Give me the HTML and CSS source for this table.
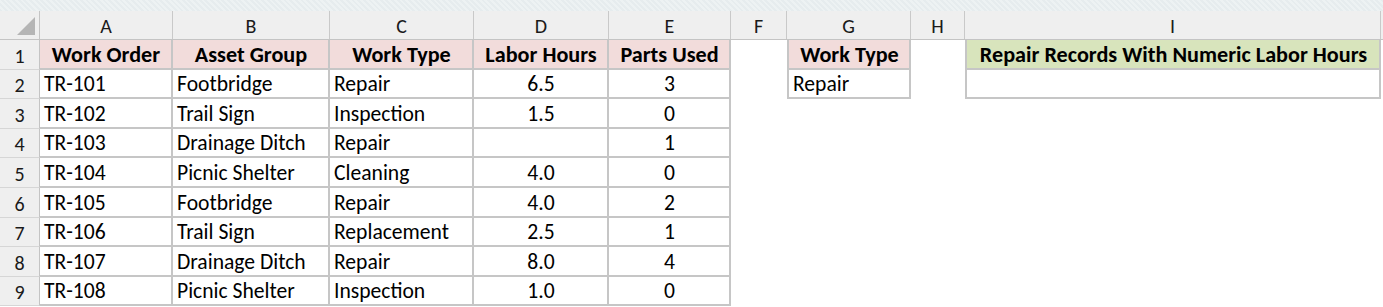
FILE: index.html
```html
<!DOCTYPE html>
<html>
<head>
<meta charset="utf-8">
<link rel="stylesheet" href="styles.css">
</head>
<body>
<div class="topstrip"></div>
<div class="sheet">
  <div class="row colhead">
    <div class="corner"><span class="tri"></span></div>
    <div class="ch">A</div><div class="ch">B</div><div class="ch">C</div><div class="ch">D</div><div class="ch">E</div><div class="ch">F</div><div class="ch">G</div><div class="ch">H</div><div class="ch">I</div>
  </div>
  <div class="row">
    <div class="rh">1</div>
    <div class="c b hd pink">Work Order</div>
    <div class="c b hd pink">Asset Group</div>
    <div class="c b hd pink">Work Type</div>
    <div class="c b hd pink">Labor Hours</div>
    <div class="c b hd pink">Parts Used</div>
    <div class="c"></div>
    <div class="c b bl hd pink">Work Type</div>
    <div class="c"></div>
    <div class="c b bl hd green">Repair Records With Numeric Labor Hours</div>
  </div>
  <div class="row">
    <div class="rh">2</div>
    <div class="c b">TR-101</div><div class="c b">Footbridge</div><div class="c b">Repair</div><div class="c b ctr">6.5</div><div class="c b ctr">3</div>
    <div class="c"></div><div class="c b bl">Repair</div><div class="c"></div><div class="c b bl"></div>
  </div>
  <div class="row">
    <div class="rh">3</div>
    <div class="c b">TR-102</div><div class="c b">Trail Sign</div><div class="c b">Inspection</div><div class="c b ctr">1.5</div><div class="c b ctr">0</div>
  </div>
  <div class="row">
    <div class="rh">4</div>
    <div class="c b">TR-103</div><div class="c b">Drainage Ditch</div><div class="c b">Repair</div><div class="c b ctr"></div><div class="c b ctr">1</div>
  </div>
  <div class="row">
    <div class="rh">5</div>
    <div class="c b">TR-104</div><div class="c b">Picnic Shelter</div><div class="c b">Cleaning</div><div class="c b ctr">4.0</div><div class="c b ctr">0</div>
  </div>
  <div class="row">
    <div class="rh">6</div>
    <div class="c b">TR-105</div><div class="c b">Footbridge</div><div class="c b">Repair</div><div class="c b ctr">4.0</div><div class="c b ctr">2</div>
  </div>
  <div class="row">
    <div class="rh">7</div>
    <div class="c b">TR-106</div><div class="c b">Trail Sign</div><div class="c b">Replacement</div><div class="c b ctr">2.5</div><div class="c b ctr">1</div>
  </div>
  <div class="row">
    <div class="rh">8</div>
    <div class="c b">TR-107</div><div class="c b">Drainage Ditch</div><div class="c b">Repair</div><div class="c b ctr">8.0</div><div class="c b ctr">4</div>
  </div>
  <div class="row">
    <div class="rh">9</div>
    <div class="c b">TR-108</div><div class="c b">Picnic Shelter</div><div class="c b">Inspection</div><div class="c b ctr">1.0</div><div class="c b ctr">0</div>
  </div>
</div>
</body>
</html>
```
FILE: styles.css
```css
html, body {
  margin: 0;
  padding: 0;
  background: #ffffff;
  overflow: hidden;
}
body {
  font-family: Carlito, Calibri, Lato, "Liberation Sans", sans-serif;
  font-size: 21.6px;
  color: #000;
  width: 1383px;
  height: 307px;
}
.topstrip {
  height: 11px;
  background: repeating-linear-gradient(45deg, #e6ecee 0 2px, #edf2f3 2px 4px);
}
.sheet {
  display: flex;
  flex-direction: column;
}
.row {
  display: grid;
  grid-template-columns: 40px 133px 157px 144px 135px 122px 56px 124px 54px 416px;
  height: 29.6px;
  box-sizing: border-box;
}
.colhead {
  height: 29px;
  background: #efefef;
  border-bottom: 1px solid #c4c4c4;
}
.corner {
  position: relative;
  border-right: 1px solid #c4c4c4;
}
.tri {
  position: absolute;
  right: 4px;
  bottom: 4px;
  width: 0;
  height: 0;
  border-left: 18px solid transparent;
  border-bottom: 18px solid #b5b5b5;
}
.ch {
  border-right: 1px solid #c9c9c9;
  display: flex;
  align-items: flex-end;
  justify-content: center;
  padding-bottom: 1px;
  box-sizing: border-box;
  color: #1a1a1a;
  font-size: 20px;
}
.rh {
  background: #efefef;
  border-right: 1px solid #c4c4c4;
  border-bottom: 1px solid #d6d6d6;
  box-sizing: border-box;
  display: flex;
  align-items: flex-end;
  justify-content: center;
  padding-bottom: 1px;
  color: #1a1a1a;
  font-size: 20px;
}
.c {
  box-sizing: border-box;
  display: flex;
  align-items: flex-end;
  padding: 0 3px 0 4px;
  white-space: nowrap;
  overflow: hidden;
}
.b {
  border-right: 2px solid #c6c6c6;
  border-bottom: 2px solid #c6c6c6;
}
.bl {
  border-left: 2px solid #c6c6c6;
}
.hd {
  font-weight: bold;
  justify-content: center;
  font-size: 22.2px;
}
.ctr {
  justify-content: center;
}
.pink {
  background: #f2dcdb;
}
.green {
  background: #d8e4bc;
}
```
